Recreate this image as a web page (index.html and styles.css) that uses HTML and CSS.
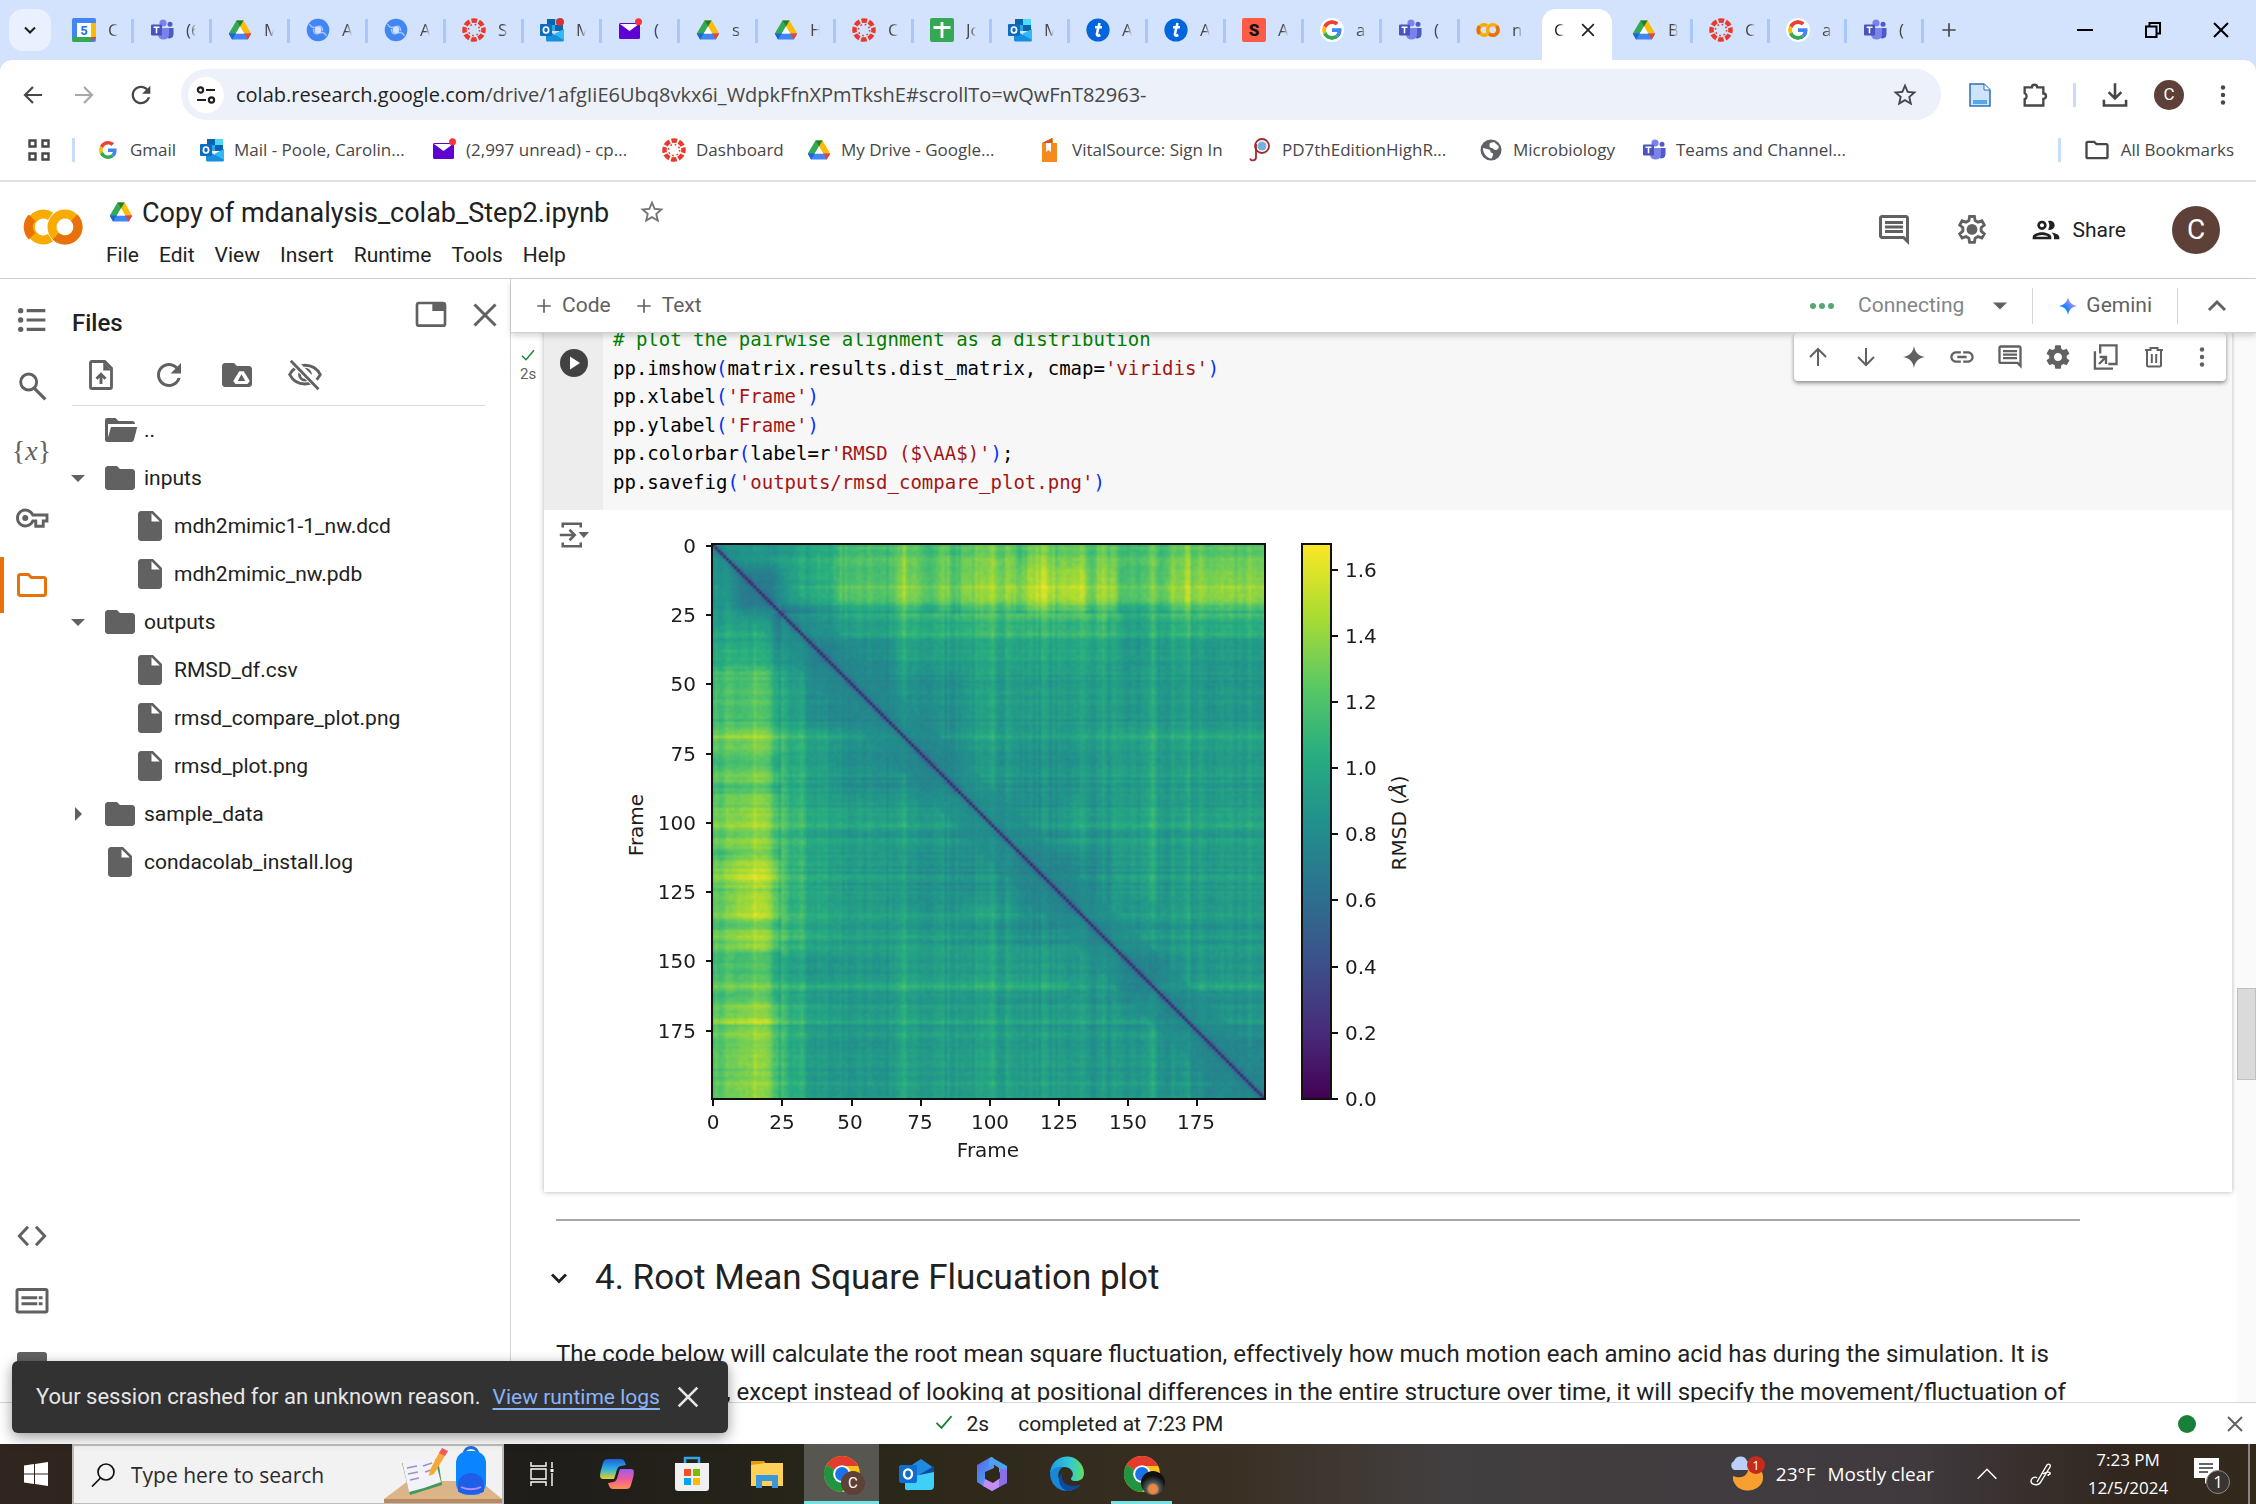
FILE: index.html
```html
<!DOCTYPE html>
<html lang="en">
<head>
<meta charset="utf-8">
<title>Copy of mdanalysis_colab_Step2.ipynb</title>
<link rel="stylesheet" href="styles.css">
</head>
<body>
<svg class="sprite" width="0" height="0" aria-hidden="true">
  <defs>
    <linearGradient id="gem" x1="1" y1="0" x2="0" y2="1"><stop offset="0.3" stop-color="#a48df5"/><stop offset="0.6" stop-color="#1b84ff"/></linearGradient>
    <linearGradient id="cop1" x1="0" y1="0" x2="0" y2="1"><stop offset="0" stop-color="#1d5fd8"/><stop offset="0.5" stop-color="#2cb1e0"/><stop offset="1" stop-color="#e8d22a"/></linearGradient>
    <linearGradient id="cop2" x1="0" y1="0" x2="0" y2="1"><stop offset="0" stop-color="#9a5cf0"/><stop offset="0.5" stop-color="#ef5a9a"/><stop offset="1" stop-color="#ff9350"/></linearGradient>
    <linearGradient id="m365" x1="0" y1="0" x2="1" y2="1"><stop offset="0" stop-color="#6c5be0"/><stop offset="0.5" stop-color="#4a8ff0"/><stop offset="1" stop-color="#c48cf5"/></linearGradient>
    <linearGradient id="edge1" x1="0" y1="0" x2="1" y2="0"><stop offset="0" stop-color="#1b9de2"/><stop offset="0.6" stop-color="#35c8d4"/><stop offset="1" stop-color="#5de05a"/></linearGradient>
    <linearGradient id="viridis" x1="0" y1="1" x2="0" y2="0"><stop offset="0" stop-color="#440154"/><stop offset="0.125" stop-color="#472d7b"/><stop offset="0.25" stop-color="#3b528b"/><stop offset="0.375" stop-color="#2c728e"/><stop offset="0.5" stop-color="#21918c"/><stop offset="0.625" stop-color="#28ae80"/><stop offset="0.75" stop-color="#5ec962"/><stop offset="0.875" stop-color="#addc30"/><stop offset="1" stop-color="#fde725"/></linearGradient>
  </defs>
  <symbol id="drive" viewBox="0 0 24 24"><path d="M8.5 2.5h7L12 8.6 4.2 21.5.8 15.6z" fill="#34a853"/><path d="M8.5 2.5h7L23.2 15.6h-7z" fill="#fbbc04"/><path d="M8.5 2.5h7L12 8.5z" fill="#188038"/><path d="M.8 15.6h22.4l-3.4 5.9H4.2z" fill="#4285f4"/><path d="M16.3 15.6h6.9l-3.4 5.9z" fill="#ea4335"/><path d="M.8 15.6h7l-3.6 5.9z" fill="#1967d2"/><path d="M12 8.5l4.2 7.1H7.8z" fill="#fff"/></symbol>
  <symbol id="calendar" viewBox="0 0 24 24"><rect width="24" height="24" rx="2" fill="#4285f4"/><path d="M19 5h5v14h-5z" fill="#fbbc04"/><path d="M0 19h19v5H2a2 2 0 0 1-2-2z" fill="#34a853"/><path d="M19 19h5l-5 5z" fill="#ea4335"/><path d="M5 5h14v14H5z" fill="#fff"/><text x="12" y="17" text-anchor="middle" font-family="Roboto" font-weight="700" font-size="13" fill="#1a73e8">5</text></symbol>
  <symbol id="teams" viewBox="0 0 24 24"><circle cx="13" cy="5" r="3.6" fill="#7b83eb"/><circle cx="20" cy="6.2" r="2.5" fill="#5059c9"/><path d="M17 10h6.5v6.500a4 4 0 0 1-6.500 3z" fill="#5059c9"/><path d="M8 10h11v7a5.600 5.600 0 0 1-11 0z" fill="#7b83eb"/><rect x="1" y="6.500" width="11" height="11" rx="1" fill="#4b53bc"/><path d="M3.500 9.200h6M6.500 9.200v6" stroke="#fff" stroke-width="1.600"/></symbol>
  <symbol id="swirl" viewBox="0 0 24 24"><circle cx="12" cy="12" r="11.300" fill="#4285f4"/><path d="M3.500 6C6 11 9 9.500 12 8.500c3-.8 5 1.500 4.500 4.500" fill="none" stroke="#a9c8fb" stroke-width="1.400"/><path d="M20.500 18c-2.500-5-5.500-3.500-8.500-2.500-3 .8-5-1.500-4.500-4.500" fill="none" stroke="#a9c8fb" stroke-width="1.400"/><circle cx="12" cy="12" r="3.300" fill="#d3e2fd"/></symbol>
  <symbol id="canvas" viewBox="0 0 24 24"><circle cx="12" cy="12" r="9.500" fill="none" stroke="#e8392b" stroke-width="4.500" stroke-dasharray="5.600 1.860" stroke-dashoffset="2.800"/><circle cx="12" cy="12" r="5.600" fill="none" stroke="#e8392b" stroke-width="1.600" stroke-dasharray="1.600 2.800"/></symbol>
  <symbol id="outlook" viewBox="0 0 24 24"><path d="M7 1h16v12H7z" fill="#28a8ea"/><path d="M7 1h8v6H7zM15 7h8v6h-8z" fill="#0a64ad"/><path d="M15 1h8v6h-8z" fill="#50d9ff"/><path d="M6 11l9 6 9-6v11a1.500 1.500 0 0 1-1.500 1.500h-15A1.500 1.500 0 0 1 6 22z" fill="#1490df"/><path d="M24 11v11l-10-6z" fill="#35b8f1"/><rect y="6" width="12" height="12" rx="1" fill="#0f6cbd"/><ellipse cx="6" cy="12" rx="2.600" ry="3" fill="none" stroke="#fff" stroke-width="1.700"/></symbol>
  <symbol id="yahoo" viewBox="0 0 24 24"><rect x="1" y="5" width="21" height="16" rx="1.500" fill="#5f01d1"/><path d="M2 6h19l-9.500 7z" fill="#fff"/><circle cx="20.500" cy="3.800" r="3.500" fill="#ff333a"/></symbol>
  <symbol id="sheets" viewBox="0 0 24 24"><rect width="24" height="24" rx="2" fill="#34a853"/><path d="M12 4v16M3.500 9.500h17" stroke="#fff" stroke-width="2.800"/></symbol>
  <symbol id="tcircle" viewBox="0 0 24 24"><circle cx="12" cy="12" r="11.600" fill="#0265dc"/><path d="M13.500 5L11 15.500c-.5 2.300 1.500 2.500 3.300 1.500M9 9.300h7" fill="none" stroke="#fff" stroke-width="2.600"/></symbol>
  <symbol id="sred" viewBox="0 0 24 24"><rect width="24" height="24" rx="2" fill="#ff5a46"/><text x="12" y="18" text-anchor="middle" font-family="Roboto" font-weight="900" font-size="17" fill="#111">S</text></symbol>
  <symbol id="google" viewBox="0 0 48 48"><path fill="#EA4335" d="M24 9.500c3.540 0 6.710 1.220 9.210 3.600l6.850-6.850C35.900 2.380 30.470 0 24 0 14.620 0 6.510 5.380 2.560 13.220l7.980 6.190C12.430 13.720 17.740 9.500 24 9.500z"/><path fill="#4285F4" d="M46.980 24.550c0-1.570-.15-3.090-.38-4.550H24v9.020h12.940c-.58 2.960-2.260 5.480-4.780 7.180l7.730 6c4.510-4.180 7.090-10.360 7.090-17.650z"/><path fill="#FBBC05" d="M10.530 28.590c-.48-1.450-.76-2.990-.76-4.590s.27-3.140.76-4.590l-7.980-6.190C.92 16.460 0 20.120 0 24c0 3.880.92 7.540 2.560 10.780l7.970-6.190z"/><path fill="#34A853" d="M24 48c6.480 0 11.930-2.130 15.890-5.810l-7.730-6c-2.150 1.450-4.920 2.300-8.160 2.300-6.260 0-11.570-4.220-13.470-9.910l-7.980 6.190C6.510 42.620 14.620 48 24 48z"/></symbol>
  <symbol id="colab" viewBox="0 0 60 36"><g fill="none" stroke-width="9"><path d="M27.500 7.200A13 13 0 1 0 27.500 28.800" stroke="#f9ab00"/><path d="M9 27.200A13 13 0 0 1 9 8.800" stroke="#e8710a"/><circle cx="42" cy="18" r="13" stroke="#f9ab00"/><path d="M51.200 8.800A13 13 0 0 1 32.800 27.200" stroke="#e8710a"/></g></symbol>
  <symbol id="close" viewBox="0 0 24 24"><path d="M5 5l14 14M19 5L5 19" fill="none" stroke="currentColor" stroke-width="2"/></symbol>
  <symbol id="plus" viewBox="0 0 24 24"><path d="M12 4v16M4 12h16" stroke="currentColor" stroke-width="2"/></symbol>
  <symbol id="down" viewBox="0 0 24 24"><path d="M6 9l6 6 6-6" fill="none" stroke="currentColor" stroke-width="2.500"/></symbol>
  <symbol id="up" viewBox="0 0 24 24"><path d="M6 15l6-6 6 6" fill="none" stroke="currentColor" stroke-width="2.200"/></symbol>
  <symbol id="caret" viewBox="0 0 24 24"><path d="M5 8.500h14l-7 7z" fill="currentColor"/></symbol>
  <symbol id="dots" viewBox="0 0 24 24"><g fill="currentColor"><circle cx="12" cy="4.500" r="2.200"/><circle cx="12" cy="12" r="2.200"/><circle cx="12" cy="19.500" r="2.200"/></g></symbol>
  <symbol id="star" viewBox="0 0 24 24"><path d="M22 9.240l-7.190-.62L12 2 9.190 8.630 2 9.240l5.460 4.730L5.820 21 12 17.270 18.180 21l-1.630-7.030L22 9.240zM12 15.400l-3.760 2.270 1-4.280-3.320-2.880 4.380-.38L12 6.100l1.710 4.040 4.380.38-3.320 2.880 1 4.280L12 15.400z" fill="currentColor"/></symbol>
  <symbol id="left" viewBox="0 0 24 24"><path d="M21 12H4M12 4l-8 8 8 8" fill="none" stroke="currentColor" stroke-width="2.200"/></symbol>
  <symbol id="reload" viewBox="0 0 24 24"><path d="M17.650 6.350C16.200 4.900 14.210 4 12 4c-4.420 0-7.990 3.580-7.990 8s3.570 8 7.990 8c3.730 0 6.840-2.550 7.730-6h-2.080c-.82 2.330-3.040 4-5.650 4-3.310 0-6-2.690-6-6s2.690-6 6-6c1.660 0 3.140.69 4.220 1.780L13 11h7V4l-2.350 2.350z" fill="currentColor"/></symbol>
  <symbol id="folderline" viewBox="0 0 24 24"><path d="M9.170 6l2 2H20v10H4V6h5.170M10 4H4c-1.100 0-2 .9-2 2v12c0 1.100.9 2 2 2h16c1.100 0 2-.9 2-2V8c0-1.100-.9-2-2-2h-8l-2-2z" fill="currentColor"/></symbol>
  <symbol id="folder" viewBox="0 0 24 24"><path d="M10 4H4c-1.100 0-2 .9-2 2v12c0 1.100.9 2 2 2h16c1.100 0 2-.9 2-2V8c0-1.100-.9-2-2-2h-8l-2-2z" fill="currentColor"/></symbol>
  <symbol id="folderopen" viewBox="0 0 24 24"><path d="M3.500 20A1.500 1.500 0 0 1 2 18.500V5.500A1.500 1.500 0 0 1 3.500 4H9l2 2h9a2 2 0 0 1 2 2H4v9l2-7h17.500l-2.200 8.500A2 2 0 0 1 19.300 20z" fill="currentColor"/></symbol>
  <symbol id="file" viewBox="0 0 24 24"><path d="M6 2c-1.100 0-2 .9-2 2v16c0 1.100.9 2 2 2h12c1.100 0 2-.9 2-2V8l-6-6H6zm7 7V3.500L18.500 9H13z" fill="currentColor"/></symbol>
  <symbol id="comment" viewBox="0 0 24 24"><path d="M21.990 4c0-1.100-.89-2-1.990-2H4c-1.100 0-2 .9-2 2v12c0 1.100.9 2 2 2h14l4 4-.01-18zM20 4v13.170L18.830 16H4V4h16zM6 12h12v2H6zm0-3h12v2H6zm0-3h12v2H6z" fill="currentColor"/></symbol>
  <symbol id="gear" viewBox="0 0 24 24"><path d="M19.430 12.980c.04-.32.07-.64.07-.98s-.03-.66-.07-.98l2.110-1.650c.19-.15.24-.42.12-.64l-2-3.460c-.12-.22-.39-.3-.61-.22l-2.490 1c-.52-.4-1.080-.73-1.690-.98l-.38-2.650C14.460 2.180 14.250 2 14 2h-4c-.25 0-.46.18-.49.42l-.38 2.650c-.61.25-1.170.59-1.690.98l-2.490-1c-.23-.09-.49 0-.61.22l-2 3.460c-.13.22-.07.49.12.64l2.110 1.650c-.04.32-.07.65-.07.98s.03.66.07.98l-2.110 1.650c-.19.15-.24.42-.12.64l2 3.460c.12.22.39.3.61.22l2.490-1c.52.4 1.080.73 1.690.98l.38 2.650c.03.24.24.42.49.42h4c.25 0 .46-.18.49-.42l.38-2.650c.61-.25 1.170-.59 1.690-.98l2.490 1c.23.09.49 0 .61-.22l2-3.460c.12-.22.07-.49-.12-.64l-2.110-1.650zM12 15.500c-1.930 0-3.500-1.570-3.500-3.500s1.570-3.500 3.500-3.500 3.500 1.570 3.500 3.500-1.570 3.500-3.500 3.500z" fill="currentColor"/></symbol>
  <symbol id="gearline" viewBox="0 0 24 24"><path d="M10.400 3h3.200l.5 2.700 1.900 1.100 2.600-.9 1.600 2.800-2.100 1.800v2.200l2.100 1.900-1.600 2.700-2.600-.9-1.900 1.100-.5 2.700h-3.200l-.5-2.700L8 16.400l-2.600.9-1.600-2.700 2.100-1.900v-2.200L3.800 8.700l1.600-2.800 2.600.9 1.900-1.100z" fill="none" stroke="currentColor" stroke-width="1.900"/><circle cx="12" cy="11.600" r="3.600" fill="currentColor"/></symbol>
  <symbol id="people" viewBox="0 0 24 24"><path d="M9 13.750c-2.340 0-7 1.170-7 3.500V19h14v-1.750c0-2.330-4.660-3.500-7-3.500zM4.340 17c.84-.58 2.870-1.250 4.660-1.250s3.820.67 4.660 1.250H4.340zM9 12c1.930 0 3.500-1.570 3.500-3.500S10.930 5 9 5 5.500 6.570 5.500 8.500 7.070 12 9 12zm0-5c.83 0 1.500.67 1.500 1.500S9.830 10 9 10s-1.500-.67-1.500-1.500S8.170 7 9 7zm7.040 6.810c1.160.84 1.960 1.960 1.960 3.440V19h4v-1.750c0-2.020-3.500-3.170-5.960-3.440zM15 12c1.930 0 3.500-1.570 3.500-3.500S16.930 5 15 5c-.54 0-1.040.13-1.500.35.63.89 1 1.980 1 3.150s-.37 2.260-1 3.150c.46.22.96.35 1.500.35z" fill="currentColor"/></symbol>
  <symbol id="arrowup" viewBox="0 0 24 24"><path d="M12 21V4M4 12l8-8 8 8" fill="none" stroke="currentColor" stroke-width="2"/></symbol>
  <symbol id="arrowdown" viewBox="0 0 24 24"><path d="M12 3v17M4 12l8 8 8-8" fill="none" stroke="currentColor" stroke-width="2"/></symbol>
  <symbol id="spark" viewBox="0 0 24 24"><path d="M12 1c1 6.500 4.500 10 11 11-6.500 1-10 4.500-11 11-1-6.500-4.500-10-11-11 6.500-1 10-4.500 11-11z"/></symbol>
  <symbol id="link" viewBox="0 0 24 24"><path d="M3.900 12c0-1.710 1.390-3.100 3.100-3.100h4V7H7c-2.760 0-5 2.240-5 5s2.240 5 5 5h4v-1.900H7c-1.710 0-3.100-1.390-3.100-3.100zM8 13h8v-2H8v2zm9-6h-4v1.900h4c1.710 0 3.100 1.390 3.100 3.100s-1.390 3.100-3.100 3.100h-4V17h4c2.760 0 5-2.240 5-5s-2.240-5-5-5z" fill="currentColor"/></symbol>
  <symbol id="mirror" viewBox="0 0 24 24"><path d="M7 9V2h14v16h-7M2.500 7v15H18" fill="none" stroke="currentColor" stroke-width="2"/><path d="M6 18l5.500-5.500M6.500 12H12v6" fill="none" stroke="currentColor" stroke-width="2"/></symbol>
  <symbol id="trash" viewBox="0 0 24 24"><path d="M5 6v14a1.500 1.500 0 0 0 1.500 1.500h11A1.500 1.500 0 0 0 19 20V6M3 5h5.500V3h7v2H21M9.800 9v9M14.200 9v9" fill="none" stroke="currentColor" stroke-width="2"/></symbol>
  <symbol id="check" viewBox="0 0 24 24"><path d="M3 13l6 6L21 5" fill="none" stroke="#188038" stroke-width="2.200"/></symbol>
  <symbol id="chrome" viewBox="0 0 40 40"><circle cx="20" cy="20" r="18" fill="#fbc116"/><path d="M20 20L4.400 11A18 18 0 0 1 35.600 11L36 12H20z" fill="#e33b2e"/><path d="M4.400 11A18 18 0 0 0 20 38l7-13-7-5z" fill="#229342"/><circle cx="20" cy="20" r="8.800" fill="#fff"/><circle cx="20" cy="20" r="6.900" fill="#1a73e8"/></symbol>
</svg>

<header class="browser">
  <div class="tabstrip">
    <button class="tabsearch" aria-label="Search tabs"><svg class="i20"><use href="#down"/></svg></button>
    <nav class="tabs">
      <button class="tab"><svg class="i24"><use href="#calendar"/></svg><span>C</span></button>
      <button class="tab"><svg class="i24"><use href="#teams"/></svg><span>(6</span></button>
      <button class="tab"><svg class="i24"><use href="#drive"/></svg><span>M</span></button>
      <button class="tab"><svg class="i24"><use href="#swirl"/></svg><span>A</span></button>
      <button class="tab"><svg class="i24"><use href="#swirl"/></svg><span>A</span></button>
      <button class="tab"><svg class="i24"><use href="#canvas"/></svg><span>S</span></button>
      <button class="tab dot"><svg class="i24"><use href="#outlook"/></svg><span>M</span></button>
      <button class="tab"><svg class="i24"><use href="#yahoo"/></svg><span>(</span></button>
      <button class="tab"><svg class="i24"><use href="#drive"/></svg><span>s</span></button>
      <button class="tab"><svg class="i24"><use href="#drive"/></svg><span>H</span></button>
      <button class="tab"><svg class="i24"><use href="#canvas"/></svg><span>C</span></button>
      <button class="tab"><svg class="i24"><use href="#sheets"/></svg><span>Jo</span></button>
      <button class="tab"><svg class="i24"><use href="#outlook"/></svg><span>M</span></button>
      <button class="tab"><svg class="i24"><use href="#tcircle"/></svg><span>A</span></button>
      <button class="tab"><svg class="i24"><use href="#tcircle"/></svg><span>A</span></button>
      <button class="tab"><svg class="i24"><use href="#sred"/></svg><span>A</span></button>
      <button class="tab"><svg class="i24 round"><use href="#google"/></svg><span>a</span></button>
      <button class="tab"><svg class="i24"><use href="#teams"/></svg><span>(</span></button>
      <button class="tab last"><svg class="i24"><use href="#colab"/></svg><span>n</span></button>
      <button class="tab active"><span>C</span><svg class="i20"><use href="#close"/></svg></button>
      <button class="tab"><svg class="i24"><use href="#drive"/></svg><span>B</span></button>
      <button class="tab"><svg class="i24"><use href="#canvas"/></svg><span>C</span></button>
      <button class="tab"><svg class="i24 round"><use href="#google"/></svg><span>a</span></button>
      <button class="tab"><svg class="i24"><use href="#teams"/></svg><span>(</span></button>
      <button class="newtab" aria-label="New tab"><svg class="i20"><use href="#plus"/></svg></button>
    </nav>
    <div class="winctl">
      <button aria-label="Minimize"><svg class="i16" viewBox="0 0 16 16"><path d="M0 8h16" stroke="#000" stroke-width="2"/></svg></button>
      <button aria-label="Restore"><svg class="i16" viewBox="0 0 16 16"><path d="M1 4.500h10.500V15H1zM4.500 4V1H15v10.500h-3" fill="none" stroke="#000" stroke-width="2"/></svg></button>
      <button aria-label="Close"><svg class="i16" viewBox="0 0 16 16"><path d="M1 1l14 14M15 1L1 15" stroke="#000" stroke-width="2"/></svg></button>
    </div>
  </div>
  <div class="toolbar">
    <button class="tb" aria-label="Back"><svg class="i24"><use href="#left"/></svg></button>
    <button class="tb flip" aria-label="Forward"><svg class="i24"><use href="#left"/></svg></button>
    <button class="tb" aria-label="Reload"><svg class="i28"><use href="#reload"/></svg></button>
    <div class="omnibox">
      <button class="site" aria-label="Site information"><svg class="i20" viewBox="0 0 20 20"><g fill="none" stroke="#1f1f1f" stroke-width="2.200"><circle cx="4.500" cy="5" r="2.600"/><path d="M10 5h9M1 15h9"/><circle cx="15.500" cy="15" r="2.600"/></g></svg></button>
      <p class="url" aria-label="Address">colab.research.google.com<span>/drive/1afgIiE6Ubq8vkx6i_WdpkFfnXPmTkshE#scrollTo=wQwFnT82963-</span></p>
      <button class="tb" aria-label="Bookmark"><svg class="i28"><use href="#star"/></svg></button>
    </div>
    <div class="tools">
      <button class="tb" aria-label="Reader"><svg class="i24" viewBox="0 0 24 24"><path d="M2 1h14l6 6v16H2z" fill="#cfe4fb" stroke="#2f6cb8" stroke-width="1.500"/><path d="M16 1v6h6" fill="#fff" stroke="#2f6cb8"/><path d="M5 17h14v4H5z" fill="#55a8ee"/></svg></button>
      <button class="tb" aria-label="Extensions"><svg class="i28" viewBox="0 0 24 24"><path d="M4 5.500h6.200a2.300 2.300 0 0 1 4.600 0H20v5.200a2.300 2.300 0 0 1 0 4.600V21H4v-5.500a2.700 2.700 0 0 0 0-5z" fill="none" stroke="#474747" stroke-width="2"/></svg></button>
      <i class="vsep"></i>
      <button class="tb" aria-label="Downloads"><svg class="i28" viewBox="0 0 24 24"><path d="M12 2v13M6.500 9.500L12 15l5.500-5.500M2.500 16v5h19v-5" fill="none" stroke="#474747" stroke-width="2.200"/></svg></button>
      <button class="tb avatar small">C</button>
      <button class="tb" aria-label="Menu"><svg class="i24"><use href="#dots"/></svg></button>
    </div>
  </div>
  <nav class="bookmarks">
    <button class="apps" aria-label="Apps"><svg class="i24" viewBox="0 0 24 24"><path d="M2.500 2.500h6v6h-6zM15.500 2.500h6v6h-6zM2.500 15.500h6v6h-6zM15.500 15.500h6v6h-6z" fill="none" stroke="#474747" stroke-width="2.400"/></svg></button>
    <i class="vsep"></i>
    <div class="marks">
      <a href="#"><svg class="i24 pad"><use href="#google"/></svg>Gmail</a>
      <a href="#"><svg class="i24"><use href="#outlook"/></svg>Mail - Poole, Carolin...</a>
      <a href="#"><svg class="i24"><use href="#yahoo"/></svg>(2,997 unread) - cp...</a>
      <a href="#"><svg class="i24"><use href="#canvas"/></svg>Dashboard</a>
      <a href="#"><svg class="i24"><use href="#drive"/></svg>My Drive - Google...</a>
      <a href="#"><svg class="i24" viewBox="0 0 24 24"><path d="M4 5l11-5v5h4v19H4z" fill="#f58a1f"/><path d="M4 5l10-5v5z" fill="#d9531e"/><path d="M8 5h5v9l-2.500-2L8 14z" fill="#fff"/></svg>VitalSource: Sign In</a>
      <a href="#"><svg class="i24" viewBox="0 0 24 24"><circle cx="14" cy="8" r="7" fill="#fff" stroke="#a3282b" stroke-width="1.800"/><circle cx="14" cy="8" r="4.500" fill="#6fb3de"/><path d="M8 6v13c0 4-5 4.500-6 1.500" fill="none" stroke="#a3282b" stroke-width="1.800"/></svg>PD7thEditionHighR...</a>
      <a href="#"><svg class="i24" viewBox="0 0 24 24"><circle cx="12" cy="12" r="10.500" fill="#5f6368"/><path d="M4 10l6 1.500c2 .5 1 3 3 3.500s1 2.500-.5 5.500C8 20 4 16 4 10zM11 5l4-1 4.500 4c.8 2-1 4-3 4s-2-2-4-2-2.500-3-1.500-5z" fill="#fff"/></svg>Microbiology</a>
      <a href="#"><svg class="i24"><use href="#teams"/></svg>Teams and Channel...</a>
    </div>
    <i class="vsep"></i>
    <a class="allmarks" href="#"><svg class="i28"><use href="#folderline"/></svg>All Bookmarks</a>
  </nav>
</header>

<header class="colab">
  <svg class="logo"><use href="#colab"/></svg>
  <div class="doc">
    <div class="titleline"><svg class="i24"><use href="#drive"/></svg><h1>Copy of mdanalysis_colab_Step2.ipynb</h1><button aria-label="Star notebook"><svg class="i28"><use href="#star"/></svg></button></div>
    <nav class="menus"><button>File</button><button>Edit</button><button>View</button><button>Insert</button><button>Runtime</button><button>Tools</button><button>Help</button></nav>
  </div>
  <div class="actions">
    <button aria-label="Comments"><svg class="i36"><use href="#comment"/></svg></button>
    <button aria-label="Settings"><svg class="i36"><use href="#gearline"/></svg></button>
    <button class="share"><svg class="i32"><use href="#people"/></svg>Share</button>
    <button class="avatar">C</button>
  </div>
</header>

<div class="work">
  <nav class="rail">
    <button aria-label="Table of contents"><svg class="i32" viewBox="0 0 24 24"><g fill="currentColor"><circle cx="3.500" cy="5" r="2"/><circle cx="3.500" cy="12" r="2"/><circle cx="3.500" cy="19" r="2"/></g><path d="M8 5h14M8 12h14M8 19h14" stroke="currentColor" stroke-width="2.400"/></svg></button>
    <button aria-label="Search"><svg class="i32" viewBox="0 0 24 24"><circle cx="9.500" cy="9" r="6" fill="none" stroke="currentColor" stroke-width="2.200"/><path d="M14 14l8 8" stroke="currentColor" stroke-width="2.400"/></svg></button>
    <button class="vars" aria-label="Variables">{<em>x</em>}</button>
    <button aria-label="Secrets"><svg class="i36" viewBox="0 0 24 24"><path d="M12.500 10A5.300 5.300 0 1 0 12.500 14H14.500v3.500h5V14H22v-4z" fill="none" stroke="currentColor" stroke-width="1.900"/><circle cx="7.500" cy="12" r="2" fill="currentColor"/></svg></button>
    <button class="on" aria-label="Files"><svg class="i36"><use href="#folderline"/></svg></button>
    <span class="grow"></span>
    <button aria-label="Code snippets"><svg class="i32" viewBox="0 0 24 24"><path d="M9 5l-6.500 7L9 19M15 5l6.500 7-6.500 7" fill="none" stroke="currentColor" stroke-width="2.200"/></svg></button>
    <button aria-label="Command palette"><svg class="i36" viewBox="0 0 24 24"><rect x="2" y="5" width="20" height="15" rx="1" fill="none" stroke="currentColor" stroke-width="2"/><path d="M5 10.500h10.500M5 14.500h10.500M16.500 10.500h2.500M16.500 14.500h2.500" stroke="currentColor" stroke-width="2"/></svg></button>
    <button aria-label="Terminal"><svg class="i36" viewBox="0 0 24 24"><rect x="2" y="4" width="20" height="16" rx="2" fill="currentColor"/></svg></button>
  </nav>

  <aside class="files">
    <div class="fhead"><h2>Files</h2>
      <button aria-label="Open in tab"><svg class="i32" viewBox="0 0 24 24"><rect x="1.500" y="3" width="21" height="17" rx="1.500" fill="none" stroke="currentColor" stroke-width="2"/><path d="M13 3h9.500v6H13z" fill="currentColor"/></svg></button>
      <button aria-label="Close panel"><svg class="i36"><use href="#close"/></svg></button></div>
    <div class="ftools">
      <button aria-label="Upload"><svg class="i36" viewBox="0 0 24 24"><path d="M14.500 3H6a1 1 0 0 0-1 1v16a1 1 0 0 0 1 1h12a1 1 0 0 0 1-1V7.500zM12 18v-6M9 14.500l3-3 3 3" fill="none" stroke="currentColor" stroke-width="1.900"/><path d="M13.500 3v6H19z" fill="currentColor"/></svg></button>
      <button aria-label="Refresh"><svg class="i36"><use href="#reload"/></svg></button>
      <button aria-label="Mount Drive"><svg class="i36" viewBox="0 0 24 24"><path d="M10 4H4c-1.100 0-2 .9-2 2v12c0 1.100.9 2 2 2h16c1.100 0 2-.9 2-2V8c0-1.100-.9-2-2-2h-8l-2-2z" fill="currentColor"/><path d="M13.500 9.500h3L20.500 16l-1.500 2h-8l-1.500-2zM15 11.500L12.500 16h5z" fill="#fff" fill-rule="evenodd"/></svg></button>
      <button aria-label="Hidden files"><svg class="i36" viewBox="0 0 24 24"><path d="M1.800 11.800C4 7.500 7.800 5.500 12 5.500s8 2 10.200 6.300C20 16 16.200 18 12 18s-8-2-10.200-6.200z" fill="none" stroke="currentColor" stroke-width="1.900"/><circle cx="12" cy="11.800" r="3.600" fill="none" stroke="currentColor" stroke-width="2"/><path d="M3.500 2.500l18 18" stroke="#fff" stroke-width="5"/><path d="M2.500 2.500l18.500 19" stroke="currentColor" stroke-width="1.900"/></svg></button>
    </div>
    <ul class="tree">
      <li><svg class="i36"><use href="#folderopen"/></svg>..</li>
      <li class="open"><svg class="i36"><use href="#folder"/></svg>inputs</li>
      <li class="child"><svg class="i36"><use href="#file"/></svg>mdh2mimic1-1_nw.dcd</li>
      <li class="child"><svg class="i36"><use href="#file"/></svg>mdh2mimic_nw.pdb</li>
      <li class="open"><svg class="i36"><use href="#folder"/></svg>outputs</li>
      <li class="child"><svg class="i36"><use href="#file"/></svg>RMSD_df.csv</li>
      <li class="child"><svg class="i36"><use href="#file"/></svg>rmsd_compare_plot.png</li>
      <li class="child"><svg class="i36"><use href="#file"/></svg>rmsd_plot.png</li>
      <li class="shut"><svg class="i36"><use href="#folder"/></svg>sample_data</li>
      <li><svg class="i36"><use href="#file"/></svg>condacolab_install.log</li>
    </ul>
  </aside>

  <main class="notebook">
    <div class="nbbar">
      <button><svg class="i20"><use href="#plus"/></svg>Code</button>
      <button><svg class="i20"><use href="#plus"/></svg>Text</button>
      <span class="grow"></span>
      <svg class="busy" viewBox="0 0 24 8"><g fill="#57a773"><circle cx="3" cy="4" r="3"/><circle cx="12" cy="4" r="3"/><circle cx="21" cy="4" r="3"/></g></svg>
      <button class="conn">Connecting</button>
      <button class="drop" aria-label="Runtime options"><svg class="i24"><use href="#caret"/></svg></button>
      <button class="gemini"><svg class="i20" fill="url(#gem)"><use href="#spark"/></svg>Gemini</button>
      <button class="collapse" aria-label="Collapse header"><svg class="i32"><use href="#up"/></svg></button>
    </div>
    <div class="scroller">
      <div class="page">
        <section class="cellrow">
          <div class="ran"><svg class="i16"><use href="#check"/></svg>2s</div>
          <div class="cell">
            <div class="input">
              <div class="gutter"><button aria-label="Run cell"><svg class="i28" viewBox="0 0 28 28"><circle cx="14" cy="14" r="14" fill="#424242"/><path d="M10 7.500v13l10-6.500z" fill="#fff"/></svg></button></div>
<pre><code><span class="c"># plot the pairwise alignment as a distribution</span>
pp.imshow<b>(</b>matrix.results.dist_matrix, cmap=<i>'viridis'</i><b>)</b>
pp.xlabel<b>(</b><i>'Frame'</i><b>)</b>
pp.ylabel<b>(</b><i>'Frame'</i><b>)</b>
pp.colorbar<b>(</b>label=r<i>'RMSD ($\AA$)'</i><b>)</b>;
pp.savefig<b>(</b><i>'outputs/rmsd_compare_plot.png'</i><b>)</b></code></pre>
            </div>
            <div class="output">
              <div class="outgutter"><svg class="i36" viewBox="0 0 24 24"><path d="M4.500 7V4.500h12V7M4.500 17v2.500h12V17M2.500 12h10M9 8.500l3.500 3.500L9 15.500" fill="none" stroke="currentColor" stroke-width="1.700"/><path d="M15 10h7l-3.500 4z" fill="currentColor"/></svg></div>
              <svg class="plot" viewBox="0 0 820 656" role="img" aria-label="Pairwise RMSD heat map">
                <foreignObject x="99" y="24" width="553" height="555"><canvas id="heat" class="heat" width="200" height="200"></canvas></foreignObject>
                <g class="axes">
                  <rect x="99" y="24" width="553" height="555"/>
                  <path d="M93 26h6M93 95h6M93 164h6M93 234h6M93 303h6M93 372h6M93 441h6M93 511h6"/>
                  <path d="M100 579v7M169 579v7M239 579v7M308 579v7M377 579v7M446 579v7M515 579v7M584 579v7"/>
                  <rect x="689" y="24" width="29" height="555" fill="url(#viridis)"/>
                  <path d="M718 579h7M718 513h7M718 447h7M718 380h7M718 314h7M718 248h7M718 182h7M718 116h7M718 50h7"/>
                </g>
                <g text-anchor="end"><text x="83" y="33">0</text><text x="83" y="102">25</text><text x="83" y="171">50</text><text x="83" y="241">75</text><text x="83" y="310">100</text><text x="83" y="379">125</text><text x="83" y="448">150</text><text x="83" y="518">175</text></g>
                <g text-anchor="middle"><text x="100" y="609">0</text><text x="169" y="609">25</text><text x="237" y="609">50</text><text x="307" y="609">75</text><text x="377" y="609">100</text><text x="446" y="609">125</text><text x="515" y="609">150</text><text x="583" y="609">175</text><text x="375" y="637">Frame</text>
                <text transform="rotate(-90)" x="-305" y="30">Frame</text><text transform="rotate(-90)" x="-303" y="793">RMSD (<tspan font-style="italic">Å</tspan>)</text></g>
                <g><text x="732" y="586">0.0</text><text x="732" y="520">0.2</text><text x="732" y="454">0.4</text><text x="732" y="387">0.6</text><text x="732" y="321">0.8</text><text x="732" y="255">1.0</text><text x="732" y="189">1.2</text><text x="732" y="123">1.4</text><text x="732" y="57">1.6</text></g>
              </svg>
            </div>
            <div class="celltools">
              <button aria-label="Move up"><svg class="i24"><use href="#arrowup"/></svg></button>
              <button aria-label="Move down"><svg class="i24"><use href="#arrowdown"/></svg></button>
              <button aria-label="AI"><svg class="i24" fill="currentColor"><use href="#spark"/></svg></button>
              <button aria-label="Link"><svg class="i28"><use href="#link"/></svg></button>
              <button aria-label="Comment"><svg class="i28"><use href="#comment"/></svg></button>
              <button aria-label="Cell settings"><svg class="i28"><use href="#gear"/></svg></button>
              <button aria-label="Mirror"><svg class="i28"><use href="#mirror"/></svg></button>
              <button aria-label="Delete"><svg class="i24"><use href="#trash"/></svg></button>
              <button aria-label="More"><svg class="i24"><use href="#dots"/></svg></button>
            </div>
          </div>
        </section>
        <section class="textcell">
          <hr>
          <h2><button aria-label="Collapse section"><svg class="i28"><use href="#down"/></svg></button>4. Root Mean Square Flucuation plot</h2>
          <p>The code below will calculate the root mean square fluctuation, effectively how much motion each amino acid has during the simulation. It is similar to RMSD, except instead of looking at positional differences in the entire structure over time, it will specify the movement/fluctuation of</p>
        </section>
      </div>
      <div class="scrollbar"><i></i></div>
    </div>
  </main>
</div>

<footer class="status">
  <span class="mid"><svg class="i20"><use href="#check"/></svg><span>2s</span><span class="when">completed at 7:23 PM</span></span>
  <i class="ok"></i>
  <button aria-label="Close status"><svg class="i24"><use href="#close"/></svg></button>
</footer>

<div class="toast" role="alert"><span>Your session crashed for an unknown reason.</span><a href="#">View runtime logs</a><button aria-label="Dismiss"><svg class="i32"><use href="#close"/></svg></button></div>

<div class="taskbar">
  <button class="start" aria-label="Start"><svg class="i24" viewBox="0 0 24 24"><path d="M0 3.500L10 2v9.500H0zM11 1.900L24 0v11.500H11zM0 12.500h10V22L0 20.500zM11 12.500h13V24l-13-1.900z" fill="#fff"/></svg></button>
  <label class="search"><svg class="i24" viewBox="0 0 24 24"><circle cx="15" cy="9" r="8" fill="none" stroke="#111" stroke-width="1.700"/><path d="M9.500 15L1 23.500" stroke="#111" stroke-width="1.700"/></svg><input type="text" placeholder="Type here to search" aria-label="Type here to search">
    <svg class="art" viewBox="0 0 118 58"><path d="M24 36h72l22 18v4H0v-4z" fill="#dcb48a"/><path d="M0 54h118v4H0z" fill="#b98a62"/><path d="M18 18l36-4 4 26-32 10z" fill="#3f9b57"/><path d="M18 16l17-1 5 28-15 4zM35 15l15-4 7 26-17 6z" fill="#f3f1fa"/><path d="M23 23l10-2M24 29l10-2M26 35l9-2M39 21l9-3M41 27l9-3" stroke="#9a93b8" stroke-width="1.500"/><path d="M56 6l6 3-12 20-5 2 1-6z" fill="#f6a93b"/><path d="M55 8l3-5 6 3-3 5z" fill="#ee5a5a"/><path d="M80 10c0-10 14-10 14 0" fill="none" stroke="#1b6fe0" stroke-width="3"/><rect x="72" y="6" width="30" height="44" rx="12" fill="#0a84ff"/><path d="M74 40c0-16 26-16 26 0v6c0 4-26 4-26 0z" fill="#1f5fe8"/><path d="M77 42c5 3 15 3 20 0" fill="none" stroke="#b58cff" stroke-width="2"/></svg>
  </label>
  <button class="app" aria-label="Task view"><svg class="i24" viewBox="0 0 24 24"><path d="M1 0v4h15V0M1 24v-4h15v4M1 7h15v10H1zM22 0v6M22 11v13" fill="none" stroke="#fff" stroke-width="1.400"/><path d="M20.500 7h3v3h-3z" fill="#fff"/></svg></button>
  <button class="app" aria-label="Copilot"><svg class="i36" viewBox="0 0 36 36"><path d="M9 3h13c3 0 4 3 5 6l-5 1c-3 0-4 3-5 7l-2 6H4c-4 0-3-5-2-9l2-7c1-3 2-4 5-4z" fill="url(#cop1)"/><path d="M27 33H14c-3 0-4-3-5-6l5-1c3 0 4-3 5-7l2-6h11c4 0 3 5 2 9l-2 7c-1 3-2 4-5 4z" fill="url(#cop2)"/></svg></button>
  <button class="app" aria-label="Store"><svg class="i36" viewBox="0 0 36 36"><path d="M11 9V2h14v7" fill="none" stroke="#2fa8e8" stroke-width="2.500"/><path d="M1 7h34v25a3 3 0 0 1-3 3H4a3 3 0 0 1-3-3z" fill="#f0f0f0"/><path d="M10 13h7v7h-7z" fill="#f25022"/><path d="M19 13h7v7h-7z" fill="#7fba00"/><path d="M10 22h7v7h-7z" fill="#00a4ef"/><path d="M19 22h7v7h-7z" fill="#ffb900"/></svg></button>
  <button class="app" aria-label="File Explorer"><svg class="i36" viewBox="0 0 36 36"><path d="M2 5h13l3 4h-16z" fill="#e09c10"/><path d="M2 9l14-2h18v23H2z" fill="#ffd257"/><path d="M7 32V19h22v13h-6v-7H13v7z" fill="#3a96dd"/></svg></button>
  <button class="app current" aria-label="Chrome"><svg class="i40"><use href="#chrome"/></svg><span class="chip">C</span></button>
  <button class="app" aria-label="Outlook"><svg class="i36" viewBox="0 0 36 36"><path d="M8 12L22 3l13 9v4L22 24 8 16z" fill="#1f8be0"/><path d="M20 19l15-9v7L22 26z" fill="#0b4aa2"/><path d="M6 33V22l29-6v14a4 4 0 0 1-4 4H10a4 4 0 0 1-4-1z" fill="#3fd0f8"/><rect y="9" width="18" height="18" rx="2" fill="#0f6cd0"/><ellipse cx="9" cy="18" rx="4" ry="4.600" fill="none" stroke="#fff" stroke-width="2.400"/></svg></button>
  <button class="app" aria-label="Microsoft 365"><svg class="i36" viewBox="0 0 36 36"><path d="M17 1L3 9v17l8 5V16l9-4V2z" fill="url(#m365)"/><path d="M17 1l16 9v11l-8-5v-4l-6-4-4 3V4z" fill="#4aa3f0"/><path d="M33 13v14l-15 8-10-6 12-2 6-5v-9z" fill="#8a6fe8"/><path d="M11 23l8 4 6-4v8l-7 4-9-5z" fill="#c48cf5"/></svg></button>
  <button class="app" aria-label="Edge"><svg class="i36" viewBox="0 0 36 36"><path d="M1 18A17 17 0 0 1 35 17c0 6-4 8-8 8-5 0-6-2-4-4 3-5-2-10-8-10C8 11 2 14 1 18z" fill="url(#edge1)"/><path d="M1 18c1-5 7-8 13-7-5 3-6 9-3 14 3 6 10 8 20 4A17 17 0 0 1 1 18z" fill="#1787d8"/><path d="M14 16c-4 8 3 17 17 13-4 5-9 6-13 6-6-2-12-12-4-19z" fill="#0c4a9e"/></svg></button>
  <button class="app running" aria-label="Chrome, second profile"><svg class="i40"><use href="#chrome"/></svg><span class="chip photo"></span></button>
  <span class="grow"></span>
  <button class="weather"><svg class="i40" viewBox="0 0 40 40"><path d="M6 22c10 4 16-2 15-9 10-2 16 4 15 12a15 13 0 0 1-30-3z" fill="#f7a030"/><path d="M7 16a5 5 0 0 1 0-9 7 7 0 0 1 13 0c5 1 5 9 0 9z" fill="#b9d1f7"/><circle cx="29" cy="11" r="9" fill="#c42b1c"/><text x="29" y="16" text-anchor="middle" font-size="13" fill="#fff">1</text></svg><span>23°F</span><span>Mostly clear</span></button>
  <button class="tray" aria-label="Show hidden icons"><svg class="i28" viewBox="0 0 24 24"><path d="M4 16l8-8 8 8" fill="none" stroke="#fff" stroke-width="1.300"/></svg></button>
  <button class="tray" aria-label="Pen"><svg class="i24" viewBox="0 0 24 24"><path d="M8 20L18 3c2-2 4 0 3 2L11 21c-2 3-9 2-9-2 0-3 4-5 6-3M14 12c4-3 8-2 7 0-1 1-2 0-2 2" fill="none" stroke="#fff" stroke-width="1.400"/></svg></button>
  <button class="clock"><span>7:23 PM</span><span>12/5/2024</span></button>
  <button class="notif" aria-label="Notifications"><svg class="i40" viewBox="0 0 40 40"><path d="M4 4h25v20H20l-5 6v-6H4z" fill="#fff"/><path d="M9 10h14M9 14h14M9 18h9" stroke="#333" stroke-width="1.300"/><circle cx="28" cy="28" r="11.500" fill="#3b3431" stroke="#8d8a87"/><text x="28" y="34" text-anchor="middle" font-size="17" fill="#fff">1</text></svg></button>
</div>
<script src="heat.js"></script>
</body>
</html>
```
FILE: styles.css
```css
* { box-sizing: border-box; }
body { margin: 0; height: 100vh; display: flex; flex-direction: column; overflow: hidden; background: #fff; color: #212121; font: 21px/1 Roboto, sans-serif; }
button { border: 0; background: none; padding: 0; margin: 0; font: inherit; color: inherit; display: flex; align-items: center; justify-content: center; }
h1, h2, p, ul, pre { margin: 0; padding: 0; font-weight: 400; }
a { color: inherit; text-decoration: none; }
svg { flex: none; display: block; }
.sprite { position: absolute; }
.grow { flex: 1; }
.i16 { width: 16px; height: 16px; }
.i20 { width: 20px; height: 20px; }
.i24 { width: 24px; height: 24px; }
.i28 { width: 28px; height: 28px; }
.i32 { width: 32px; height: 32px; }
.i36 { width: 36px; height: 36px; }
.i40 { width: 40px; height: 40px; }

/* Browser frame */
.browser { flex: none; background: #d3e2fd; font-family: "Open Sans", "Noto Sans", sans-serif; border-bottom: 2px solid #e0e0e0; color: #474747; }
.tabstrip { height: 60px; display: flex; padding-left: 9px; }
.tabsearch { width: 42px; height: 42px; margin: 9px 5px 0 0; border-radius: 14px; background: #e9f1fe; color: #1f1f1f; }
.tabs { display: flex; flex: 1; }
.tab { position: relative; width: 78px; height: 60px; padding-left: 16px; justify-content: flex-start; gap: 12px; font-size: 17px; }
.tab::after { content: ""; position: absolute; right: 0; top: 19px; width: 3px; height: 24px; background: #a8c7fa; }
.tab.last::after, .tab.active::after { display: none; }
.tab span { width: 10px; overflow: hidden; line-height: 24px; text-align: left; -webkit-mask-image: linear-gradient(90deg, #000 50%, transparent); mask-image: linear-gradient(90deg, #000 50%, transparent); }
.tab.dot::before { content: ""; position: absolute; left: 32px; top: 18px; width: 8px; height: 8px; border-radius: 50%; background: #d13438; }
.tab.active { width: 70px; height: 51px; margin: 9px 4px 0; padding: 0 0 9px 12px; gap: 14px; border-radius: 14px 14px 0 0; background: #fff; color: #1f1f1f; }
.tab.active ~ .tab { width: 77px; }
.round { background: #fff; border-radius: 50%; padding: 2px; }
.pad { padding: 3px; }
.newtab { width: 50px; }
.winctl { display: flex; padding-right: 1px; }
.winctl button { width: 68px; height: 60px; }
.toolbar { height: 69px; display: flex; align-items: center; padding-left: 12px; background: #fff; border-radius: 12px 12px 0 0; }
.tb { width: 54px; height: 40px; flex: none; color: #474747; }
.toolbar > .tb:first-child { width: 42px; }
.flip { transform: scaleX(-1); color: #a8a8a8; width: 60px; }
.omnibox { flex: 1; height: 51px; margin-left: 13px; display: flex; align-items: center; border-radius: 26px; background: #ecf1fa; padding: 0 9px 0 7px; }
.site { width: 36px; height: 36px; border-radius: 50%; background: #fff; }
.url { flex: 1; padding-left: 12px; font-size: 20px; line-height: 28px; color: #1f1f1f; white-space: nowrap; }
.url span { color: #474747; }
.tools { display: flex; align-items: center; padding: 0 6px 0 12px; }
.vsep { width: 3px; height: 24px; background: #c9dcfb; }
.tools .vsep { margin: 0 12px; }
.avatar { width: 48px; height: 48px; border-radius: 50%; background: #5d4037; color: #fff; font: 28px/1 Roboto, sans-serif; }
.avatar.small { width: 30px; height: 30px; margin: 0 12px; font-size: 17px; color: #fff; }
.bookmarks { height: 51px; display: flex; align-items: flex-start; background: #fff; padding: 9px 22px 0 12px; font-size: 17px; line-height: 24px; }
.bookmarks .vsep { flex: none; }
.apps { width: 54px; margin-right: 6px; }
.marks { flex: 1; display: grid; grid-template-columns: 104px 232px 230px 145px 231px 210px 231px 163px auto; justify-content: start; padding-left: 21px; }
.marks a, .allmarks { display: flex; align-items: center; gap: 10px; white-space: nowrap; }
.allmarks { height: 24px; padding-left: 22px; }

/* Notebook header */
.colab { flex: none; height: 97px; display: flex; padding-left: 23px; border-bottom: 1px solid #d0d0d0; }
.logo { width: 60px; height: 36px; margin-top: 27px; }
.doc { padding: 13px 0 0 23px; }
.titleline { display: flex; align-items: center; gap: 9px; height: 36px; color: #757575; padding-left: 3px; }
h1 { font-size: 27px; line-height: 36px; color: #212121; }
.titleline svg { margin-top: -3px; }
.titleline button { margin-left: 20px; }
.menus { display: flex; gap: 20px; margin-top: 9px; line-height: 30px; }
.actions { margin-left: auto; display: flex; align-items: center; padding-right: 36px; color: #616161; }
.actions > button:first-child { margin-right: 42px; }
.share { margin: 0 46px 0 40px; gap: 10px; color: #212121; }

/* Side rail and files panel */
.work { flex: 1; min-height: 0; display: flex; }
.rail { flex: none; width: 62px; display: flex; flex-direction: column; align-items: stretch; padding-top: 8px; color: #616161; }
.rail button { height: 66px; flex: none; border-left: 4px solid transparent; padding-right: 3px; }
.rail .grow ~ button { height: 64px; }
.rail .grow ~ button:last-child { margin-bottom: 6px; }
.rail .on { height: 56px; margin-top: 6px; color: #e8710a; border-left-color: #e8710a; }
.rail .vars { font: 28px/1 "Liberation Serif", serif; padding-bottom: 2px; }
.files { flex: none; width: 449px; padding: 0 25px 0 10px; border-right: 1px solid #d6d6d6; }
.fhead { display: flex; align-items: flex-start; height: 70px; padding-top: 18px; color: #616161; }
.fhead h2 { flex: 1; font-size: 24px; line-height: 30px; padding-top: 11px; color: #212121; font-weight: 500; }
.fhead button { height: 36px; margin-left: 20px; }
.fhead button:last-child { margin-right: -18px; }
.ftools { display: flex; gap: 32px; height: 57px; padding: 8px 0 0 11px; border-bottom: 1px solid #d6d6d6; color: #616161; align-items: flex-start; }
.tree { list-style: none; }
.tree li { position: relative; display: flex; align-items: center; gap: 6px; height: 48px; padding-left: 30px; line-height: 24px; }
.tree svg { color: #616161; }
.tree .child { padding-left: 60px; }
.open::before, .shut::before { content: ""; position: absolute; left: -1px; border: 7px solid transparent; }
.open::before { top: 21px; border-top-color: #616161; }
.shut::before { left: 3px; top: 17px; border-left-color: #616161; }

/* Notebook */
.notebook { flex: 1; min-width: 0; display: flex; flex-direction: column; background: #fff; }
.nbbar { position: relative; z-index: 2; flex: none; height: 54px; display: flex; align-items: center; padding-left: 23px; background: #fff; border-bottom: 1px solid #d0d0d0; box-shadow: 0 3px 6px rgba(0,0,0,.16); color: #616161; }
.nbbar > button { gap: 8px; margin-right: 23px; }
.busy { width: 24px; height: 8px; margin-right: 24px; }
.nbbar .conn { color: #80868b; margin-right: 24px; }
.nbbar .drop { width: 24px; margin-right: 20px; }
.nbbar .gemini { height: 36px; margin: 0; padding: 0 25px; border: solid #d6d6d6; border-width: 0 1px; }
.nbbar .collapse { width: 78px; margin: 0; }
.scroller { flex: 1; min-height: 0; display: flex; overflow: hidden; }
.page { flex: 1; min-width: 0; margin-top: -8px; }
.cellrow { display: flex; padding-right: 5px; }
.ran { flex: none; width: 33px; padding: 22px 0 0 9px; display: flex; flex-direction: column; gap: 3px; font-size: 15px; line-height: 16px; color: #616161; }
.cell { position: relative; flex: 1; min-width: 0; box-shadow: 0 0 5px rgba(0,0,0,.3); }
.input { display: flex; background: #f7f7f7; }
.gutter { flex: none; width: 59px; background: #ededed; padding: 24px 0 0 16px; }
pre { padding: 0 0 14px 10px; font: 19px/1.5 "DejaVu Sans Mono", "Liberation Mono", monospace; color: #000; }
code { font: inherit; }
pre b { font-weight: 400; color: #0431fa; }
pre i { font-style: normal; color: #a31515; }
pre .c { color: #008000; }
.output { display: flex; padding: 10px 0 16px; }
.outgutter { flex: none; width: 69px; padding: 0 0 0 12px; color: #616161; margin-top: -3px; }
.plot { width: 820px; max-width: 100%; font-family: "DejaVu Sans", sans-serif; font-size: 20px; fill: #1c1c1c; }
.axes { fill: none; stroke: #111; stroke-width: 2; }
.heat { display: block; width: 553px; height: 555px; }
.celltools { position: absolute; z-index: 1; right: 6px; top: 8px; display: flex; height: 48px; background: #fff; border-radius: 4px; box-shadow: 0 2px 4px rgba(0,0,0,.45); color: #616161; }
.celltools button { width: 48px; height: 48px; }
.textcell { padding: 27px 157px 0 45px; }
hr { margin: 0; border: 0; border-top: 2px solid #a6a6a6; }
.textcell h2 { display: flex; align-items: center; margin: 33px 0 33px -11px; gap: 22px; font-size: 35px; line-height: 48px; }
.textcell p { font-size: 24px; line-height: 38px; }
.scrollbar { flex: none; width: 19px; display: flex; align-items: flex-start; padding-top: 655px; background: #fafafa; }
.scrollbar i { width: 19px; height: 92px; background: #dadada; border: 1px solid #c0c0c0; }
.status { flex: none; height: 42px; display: flex; align-items: center; border-top: 1px solid #d6d6d6; background: #fff; padding-right: 9px; }
.mid { flex: 1; display: flex; justify-content: center; gap: 13px; padding-right: 21px; line-height: 24px; }
.when { margin-left: 16px; }
.ok { width: 18px; height: 18px; border-radius: 50%; background: #188038; margin-right: 27px; }
.status button { color: #616161; }
.toast { position: absolute; left: 12px; bottom: 71px; height: 72px; display: flex; align-items: center; gap: 12px; padding: 0 24px; border-radius: 6px; background: #323232; color: #e6e6e6; box-shadow: 0 4px 14px rgba(0,0,0,.4); z-index: 3; white-space: nowrap; font-size: 22px; line-height: 28px; }
.toast a { font-size: 21px; color: #8ab4f8; text-decoration: underline; text-underline-offset: 4px; text-decoration-thickness: 2px; }

/* Desktop taskbar */
.taskbar { flex: none; height: 60px; display: flex; align-items: center; color: #fff; font: 19px/24px "Open Sans", "Noto Sans", sans-serif; background: linear-gradient(90deg, #31261f 0, #1f1d1a 24%, #2b2719 40%, #3b3024 55%, #423f40 64%, #403a3e 85%, #32271f 94%, #33291b 100%); padding-right: 6px; }
.start { width: 72px; height: 60px; }
.search { position: relative; width: 432px; height: 60px; display: flex; align-items: center; gap: 16px; padding-left: 17px; background: #f2f2f2; border: 2px solid #bdbdbd; border-bottom-width: 1px; }
.search input { width: 230px; border: 0; padding: 0; background: none; font: inherit; font-size: 21px; color: #2b2b2b; }
.search input::placeholder { color: #2b2b2b; opacity: 1; }
.art { position: absolute; right: 0; bottom: 0; width: 118px; height: 58px; }
.app { position: relative; width: 75px; height: 60px; }
.current { background: #575650; }
.current::after, .running::after { content: ""; position: absolute; left: 0; right: 0; bottom: 0; height: 3px; background: #76e0e3; }
.running::after { left: 7px; right: 7px; }
.chip { position: absolute; right: 14px; bottom: 9px; width: 24px; height: 24px; border-radius: 50%; background: #5d4037; font: 15px/24px Roboto, sans-serif; }
.photo { background: radial-gradient(circle at 50% 75%, #e88746 0 20%, #4d5b5d 30%, #111 60%); }
.weather { gap: 12px; margin-right: 36px; }
.weather svg { margin-right: -3px; }
.tray { width: 34px; margin-right: 20px; }
.clock { flex-direction: column; width: 116px; font-size: 17px; line-height: 28px; margin-left: -8px; }
.notif { width: 64px; height: 60px; padding-right: 14px; border-right: 2px solid #8a857f; }
```
FILE: heat.js
```js
// Draws the 200 x 200 pairwise RMSD matrix with the viridis colour map.
(function () {
  var N = 200, VMAX = 1.675;
  var stops = [[68,1,84],[71,45,123],[59,82,139],[44,114,142],[33,145,140],[40,174,128],[94,201,98],[173,220,48],[253,231,37]];
  var seed = 7;
  function rnd() { seed = (seed * 16807) % 2147483647; return seed / 2147483647; }
  // first frame of each conformational state, and mean RMSD between states
  var starts = [0,8,25,34,45,66,90,110,128,135,146,162,174];
  var mean = [
    [.84,.88,.92,.98,1.15,1.20,1.24,1.27,1.27,1.24,1.14,1.22,1.22],
    [.72,.94,1.00,1.21,1.29,1.35,1.44,1.46,1.38,1.20,1.34,1.36],
    [.78,.84,.92,.99,1.04,1.05,1.05,1.05,.92,1.00,1.00],
    [.76,.81,.92,.96,.97,.99,.97,.87,.92,.89],
    [.80,.82,.91,.91,.93,.91,.88,.88,.87],
    [.78,.86,.83,.86,.88,.90,.89,.90],
    [.82,.82,.92,.85,.91,.88,.91],
    [.78,.80,.80,.90,.87,.90],
    [.77,.85,.88,.90,.90],
    [.78,.85,.85,.86],
    [.78,.82,.87],
    [.78,.83],
    [.79]
  ];
  // frames that sit further from every other frame
  var peaks = {5:.08,6:.09,15:.06,17:.06,20:-.07,28:-.05,30:.04,31:.08,32:.10,33:.09,46:.05,56:.05,57:.05,63:-.04,67:.05,68:.08,69:.17,70:.07,73:.07,82:.08,83:.06,85:.07,91:.04,95:.04,97:.05,100:.07,101:.17,102:.11,106:.07,107:.10,114:.04,117:.05,119:.05,120:.07,130:.04,132:.05,133:.06,134:.05,140:.07,141:.09,145:.05,155:.05,157:.05,158:.14,159:.19,160:.08,166:.04,171:.13,172:.14,176:.05,184:.04,187:.06,190:.05,194:.11,195:.04,198:.05};
  // extra contrast of single frames against the opening state
  var warm = {69:.04,76:-.05,77:-.06,78:-.08,79:-.08,80:-.07,81:-.05,84:.05,86:-.03,87:-.07,88:-.07,89:-.06,110:-.12,111:-.12,112:-.10,113:-.06,116:.04,117:.06,118:.07,119:.06,120:.05,124:-.06,125:-.06,135:-.07,136:-.08,137:-.07,138:-.05,147:-.04,148:-.03,162:-.10,163:-.08,164:-.05,171:.07,172:.05};
  var state = [], n = [], k = 0, i, j;
  for (i = 0; i < N; i++) {
    while (k + 1 < starts.length && starts[k + 1] <= i) k++;
    state[i] = k;
    n[i] = (peaks[i] || 0) + (rnd() - .5) * .10;
  }
  function block(a, b) {
    var s = state[Math.min(a, b)], t = state[Math.max(a, b)];
    return mean[s][t - s];
  }
  // block mean with its borders softened over the neighbouring frames
  function base(a, b) {
    var sum = 0, w = 0, r = b > 44 && a < 25 ? 1 : 3;
    for (var p = -r; p <= r; p++) for (var q = -r; q <= r; q++) {
      if (a + p < 0 || b + q < 0 || a + p >= N || b + q >= N) continue;
      sum += block(a + p, b + q);
      w++;
    }
    return sum / w;
  }
  function value(a, b) {
    if (a === b) return .12;
    var d = b - a;
    var v = base(a, b) + (n[a] + n[b]) * (d < 14 ? .35 : .85);
    if (a < 25 && b > 44) v += (warm[b] || 0);
    if (a > 20 && a < 25 && b > 24) v -= (a - 19) * .035 + (b > 44 ? .05 : 0);
    if (a > 7 && a < 13 && b > 44) v -= .05;
    if (a < 25 && b > 34 && b < 45) v += .03;
    if (b > 157 && b < 161 && a > 128) v -= .06;
    v -= .05 * Math.exp(-d / 12);
    if (d < 3) v -= .1 / d;
    return v;
  }
  var ctx = document.getElementById('heat').getContext('2d');
  var img = ctx.createImageData(N, N);
  for (i = 0; i < N; i++) {
    for (j = i; j < N; j++) {
      var t = Math.max(0, Math.min(.9999, (value(i, j) + (i === j ? 0 : (rnd() - .5) * .06)) / VMAX)) * 8;
      var s = Math.floor(t), u = t - s;
      for (k = 0; k < 3; k++) {
        var c = stops[s][k] + (stops[s + 1][k] - stops[s][k]) * u;
        img.data[(i * N + j) * 4 + k] = c;
        img.data[(j * N + i) * 4 + k] = c;
      }
      img.data[(i * N + j) * 4 + 3] = 255;
      img.data[(j * N + i) * 4 + 3] = 255;
    }
  }
  ctx.putImageData(img, 0, 0);
})();
```
